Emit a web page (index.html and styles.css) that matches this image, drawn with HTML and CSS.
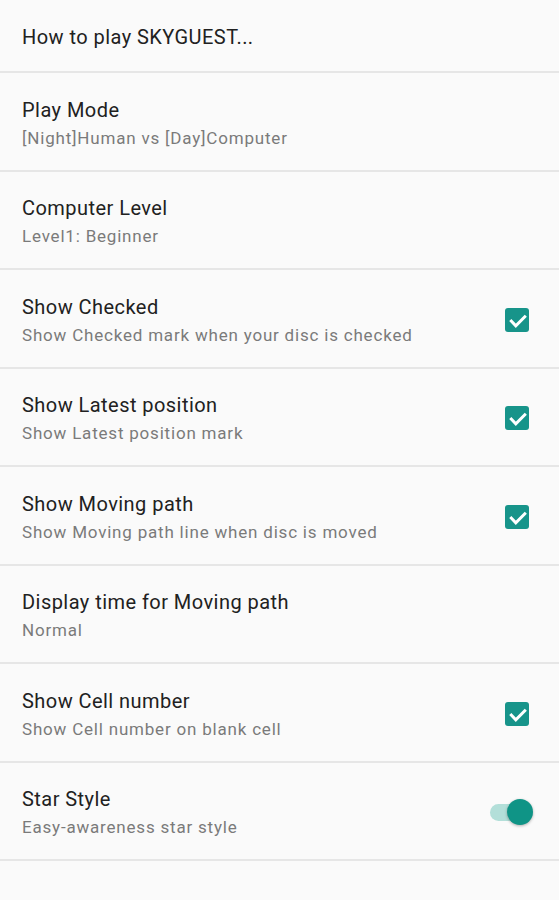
FILE: index.html
```html
<!DOCTYPE html>
<html lang="en">
<head>
    <meta charset="UTF-8">
    <meta name="viewport" content="width=device-width, initial-scale=1.0">
    <title>Settings</title>
    <link rel="stylesheet" href="styles.css">
</head>
<body>
    <div class="prefs">
        <div class="pref pref-first">
            <div class="pref-text">
                <div class="pref-title">How to play SKYGUEST...</div>
            </div>
        </div>

        <div class="pref">
            <div class="pref-text">
                <div class="pref-title">Play Mode</div>
                <div class="pref-summary">[Night]Human vs [Day]Computer</div>
            </div>
        </div>

        <div class="pref">
            <div class="pref-text">
                <div class="pref-title">Computer Level</div>
                <div class="pref-summary">Level1: Beginner</div>
            </div>
        </div>

        <div class="pref">
            <div class="pref-text">
                <div class="pref-title">Show Checked</div>
                <div class="pref-summary">Show Checked mark when your disc is checked</div>
            </div>
            <span class="checkbox">
                <svg viewBox="0 0 24 24" width="24" height="24"><path d="M5.3 12l5.5 5.8 10-10" fill="none" stroke="#fff" stroke-width="3"/></svg>
            </span>
        </div>

        <div class="pref">
            <div class="pref-text">
                <div class="pref-title">Show Latest position</div>
                <div class="pref-summary">Show Latest position mark</div>
            </div>
            <span class="checkbox">
                <svg viewBox="0 0 24 24" width="24" height="24"><path d="M5.3 12l5.5 5.8 10-10" fill="none" stroke="#fff" stroke-width="3"/></svg>
            </span>
        </div>

        <div class="pref">
            <div class="pref-text">
                <div class="pref-title">Show Moving path</div>
                <div class="pref-summary">Show Moving path line when disc is moved</div>
            </div>
            <span class="checkbox">
                <svg viewBox="0 0 24 24" width="24" height="24"><path d="M5.3 12l5.5 5.8 10-10" fill="none" stroke="#fff" stroke-width="3"/></svg>
            </span>
        </div>

        <div class="pref">
            <div class="pref-text">
                <div class="pref-title">Display time for Moving path</div>
                <div class="pref-summary">Normal</div>
            </div>
        </div>

        <div class="pref">
            <div class="pref-text">
                <div class="pref-title">Show Cell number</div>
                <div class="pref-summary">Show Cell number on blank cell</div>
            </div>
            <span class="checkbox">
                <svg viewBox="0 0 24 24" width="24" height="24"><path d="M5.3 12l5.5 5.8 10-10" fill="none" stroke="#fff" stroke-width="3"/></svg>
            </span>
        </div>

        <div class="pref">
            <div class="pref-text">
                <div class="pref-title">Star Style</div>
                <div class="pref-summary">Easy-awareness star style</div>
            </div>
            <span class="switch">
                <span class="switch-track"></span>
                <span class="switch-thumb"></span>
            </span>
        </div>
    </div>
</body>
</html>
```

FILE: styles.css
```css
body {
    margin: 0;
    font-family: Roboto, "Noto Sans", sans-serif;
    background-color: #fafafa;
}
.prefs {
    display: flex;
    flex-direction: column;
}
.pref {
    display: flex;
    align-items: center;
    height: 98.5px;
    padding: 3px 30px 0 22px;
    box-sizing: border-box;
    border-bottom: 2px solid #e6e6e6;
}
.pref-first {
    height: 73px;
}
.pref-text {
    flex: 1;
}
.pref-title {
    font-size: 20px;
    line-height: 26px;
    letter-spacing: 0.45px;
    color: #212121;
}
.pref-summary {
    margin-top: 4px;
    font-size: 17px;
    line-height: 22px;
    letter-spacing: 0.8px;
    color: #7a7a7a;
}
.checkbox {
    width: 24px;
    height: 24px;
    border-radius: 3px;
    background-color: #17948a;
    display: flex;
}
.switch {
    position: relative;
    width: 43px;
    height: 26px;
    display: flex;
    align-items: center;
}
.switch-track {
    margin-left: 4px;
    width: 36px;
    height: 17px;
    border-radius: 9px;
    background-color: #b3dfd9;
}
.switch-thumb {
    position: absolute;
    right: -4px;
    top: 0;
    width: 26px;
    height: 26px;
    border-radius: 50%;
    background-color: #0f9486;
    box-shadow: 0 1px 3px rgba(0, 0, 0, 0.3);
}
```
